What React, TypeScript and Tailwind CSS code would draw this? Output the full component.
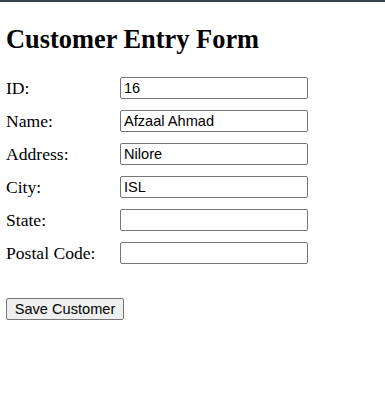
import React from "react";

const fields = [
  { label: "ID:", value: "16" },
  { label: "Name:", value: "Afzaal Ahmad" },
  { label: "Address:", value: "Nilore" },
  { label: "City:", value: "ISL" },
  { label: "State:", value: "" },
  { label: "Postal Code:", value: "" },
];

export default function App() {
  return (
    <div className="min-h-[403px] bg-white border-t-2 border-[#393f4b] text-black font-['Liberation_Serif',serif]">
      <div className="px-[6px]">
        <h2 className="pt-[22px] text-[26.4px] leading-[30px] font-bold">Customer Entry Form</h2>
        <form className="mt-[23px] flex flex-col gap-[11px]">
          {fields.map((f) => (
            <div key={f.label} className="flex items-center h-[22px]">
              <label className="w-[114px] text-[17.6px] leading-[22px]">{f.label}</label>
              <input
                type="text"
                defaultValue={f.value}
                className="w-[188px] h-[22px] border border-[#767676] rounded-[2px] px-[3px] text-[14.6px] leading-[20px] font-['Liberation_Sans',Arial,sans-serif] outline-none"
              />
            </div>
          ))}
          <div className="mt-[22px]">
            <button
              type="button"
              className="w-[118px] h-[22px] bg-[#efefef] border border-[#767676] rounded-[2px] text-[14.6px] leading-[20px] font-['Liberation_Sans',Arial,sans-serif] text-black"
            >
              Save Customer
            </button>
          </div>
        </form>
      </div>
    </div>
  );
}
